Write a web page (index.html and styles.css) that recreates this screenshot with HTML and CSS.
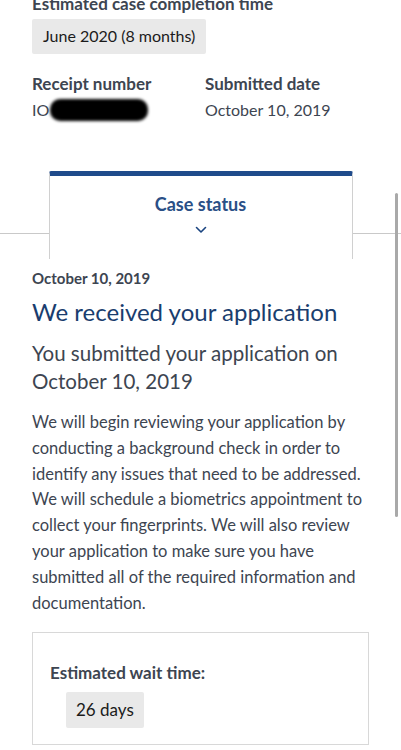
FILE: index.html
```html
<!DOCTYPE html>
<html>
<head>
<meta charset="utf-8">
<link rel="stylesheet" href="styles.css">
</head>
<body>
<div class="page">
  <section class="summary">
    <div class="label">Estimated case completion time</div>
    <div class="pill pill-top">June 2020 (8 months)</div>
    <div class="facts">
      <div class="fact fact-receipt">
        <div class="label">Receipt number</div>
        <div class="value">IO<span class="redact"></span></div>
      </div>
      <div class="fact">
        <div class="label">Submitted date</div>
        <div class="value">October 10, 2019</div>
      </div>
    </div>
  </section>

  <nav class="tabs">
    <div class="tab-rule"></div>
    <div class="tab">
      <div class="tab-title">Case status</div>
      <svg class="chev" width="12" height="8" viewBox="0 0 12 8"><path d="M1.5 1.5 L6 6 L10.5 1.5" fill="none" stroke="#1a4480" stroke-width="1.6" stroke-linecap="round" stroke-linejoin="round"/></svg>
    </div>
    <div class="tab-rule"></div>
  </nav>

  <section class="status">
    <div class="date">October 10, 2019</div>
    <h1 class="heading">We received your application</h1>
    <h2 class="sub">You submitted your application on October 10, 2019</h2>
    <p class="body">We will begin reviewing your application by conducting a background check in order to identify any issues that need to be addressed. We will schedule a biometrics appointment to collect your fingerprints. We will also review your application to make sure you have submitted all of the required information and documentation.</p>
    <div class="wait">
      <div class="label">Estimated wait time:</div>
      <div class="pill pill-wait">26 days</div>
    </div>
  </section>
</div>
<div class="scrollbar"></div>
</body>
</html>
```

FILE: styles.css
```css
html, body {
  margin: 0;
  padding: 0;
  background: #ffffff;
}
body {
  font-family: Lato, "Open Sans", sans-serif;
  color: #3d4551;
  width: 401px;
  height: 750px;
  overflow: hidden;
  position: relative;
}
.page {
  margin-top: -7px;
}
.summary {
  padding: 0 32px;
}
.label {
  font-weight: 700;
  font-size: 17px;
  line-height: 22px;
  color: #3d4551;
}
.pill {
  display: inline-block;
  background: #e9e9e9;
  color: #1b1b1b;
  font-size: 17px;
  border-radius: 2px;
}
.pill-top {
  margin-top: 4px;
  font-size: 16px;
  padding: 7px 11px 8px 11px;
  line-height: 20px;
}
.facts {
  display: flex;
  margin-top: 19px;
}
.fact-receipt {
  width: 173px;
}
.value {
  margin-top: 4px;
  font-size: 16px;
  line-height: 22px;
  color: #3d4551;
  display: flex;
  align-items: center;
}
.redact {
  display: inline-block;
  width: 98px;
  height: 22px;
  background: #000;
  border-radius: 10px;
  filter: blur(1.5px);
  margin-left: 1px;
}
.tabs {
  display: flex;
  margin-top: 50px;
  align-items: flex-start;
}
.tab-rule {
  flex: 1;
  height: 62px;
  border-bottom: 1px solid #c9c9c9;
}
.tab {
  width: 302px;
  height: 83px;
  border-top: 5px solid #1f4b8b;
  border-left: 1px solid #d0d0d0;
  border-right: 1px solid #d0d0d0;
  border-radius: 2px 2px 0 0;
  background: #fff;
  display: flex;
  flex-direction: column;
  align-items: center;
}
.tab-title {
  margin-top: 17px;
  font-size: 18px;
  font-weight: 700;
  color: #2a4f86;
  line-height: 22px;
}
.chev {
  margin-top: 11px;
}
.status {
  padding: 9px 32px 0 32px;
}
.date {
  font-weight: 700;
  font-size: 15px;
  line-height: 20px;
}
.heading {
  margin: 9px 0 0 0;
  font-size: 24px;
  font-weight: 400;
  line-height: 30px;
  color: #1a3d6e;
}
.sub {
  margin: 12px 0 0 0;
  font-size: 20.5px;
  font-weight: 400;
  line-height: 28px;
  color: #3d4551;
}
.body {
  margin: 15px 0 0 0;
  font-size: 16.5px;
  line-height: 25.8px;
  color: #3d4551;
}
.wait {
  margin-top: 16px;
  width: 337px;
  height: 113px;
  border: 1px solid #d8d8d8;
  padding: 29px 0 0 17px;
  box-sizing: border-box;
}
.pill-wait {
  margin: 8px 0 0 16px;
  padding: 8px 10px 8px 10px;
  line-height: 20px;
}
.scrollbar {
  position: absolute;
  left: 395px;
  top: 193px;
  width: 3px;
  height: 324px;
  border-radius: 2px;
  background: #a9a9a9;
}
```
